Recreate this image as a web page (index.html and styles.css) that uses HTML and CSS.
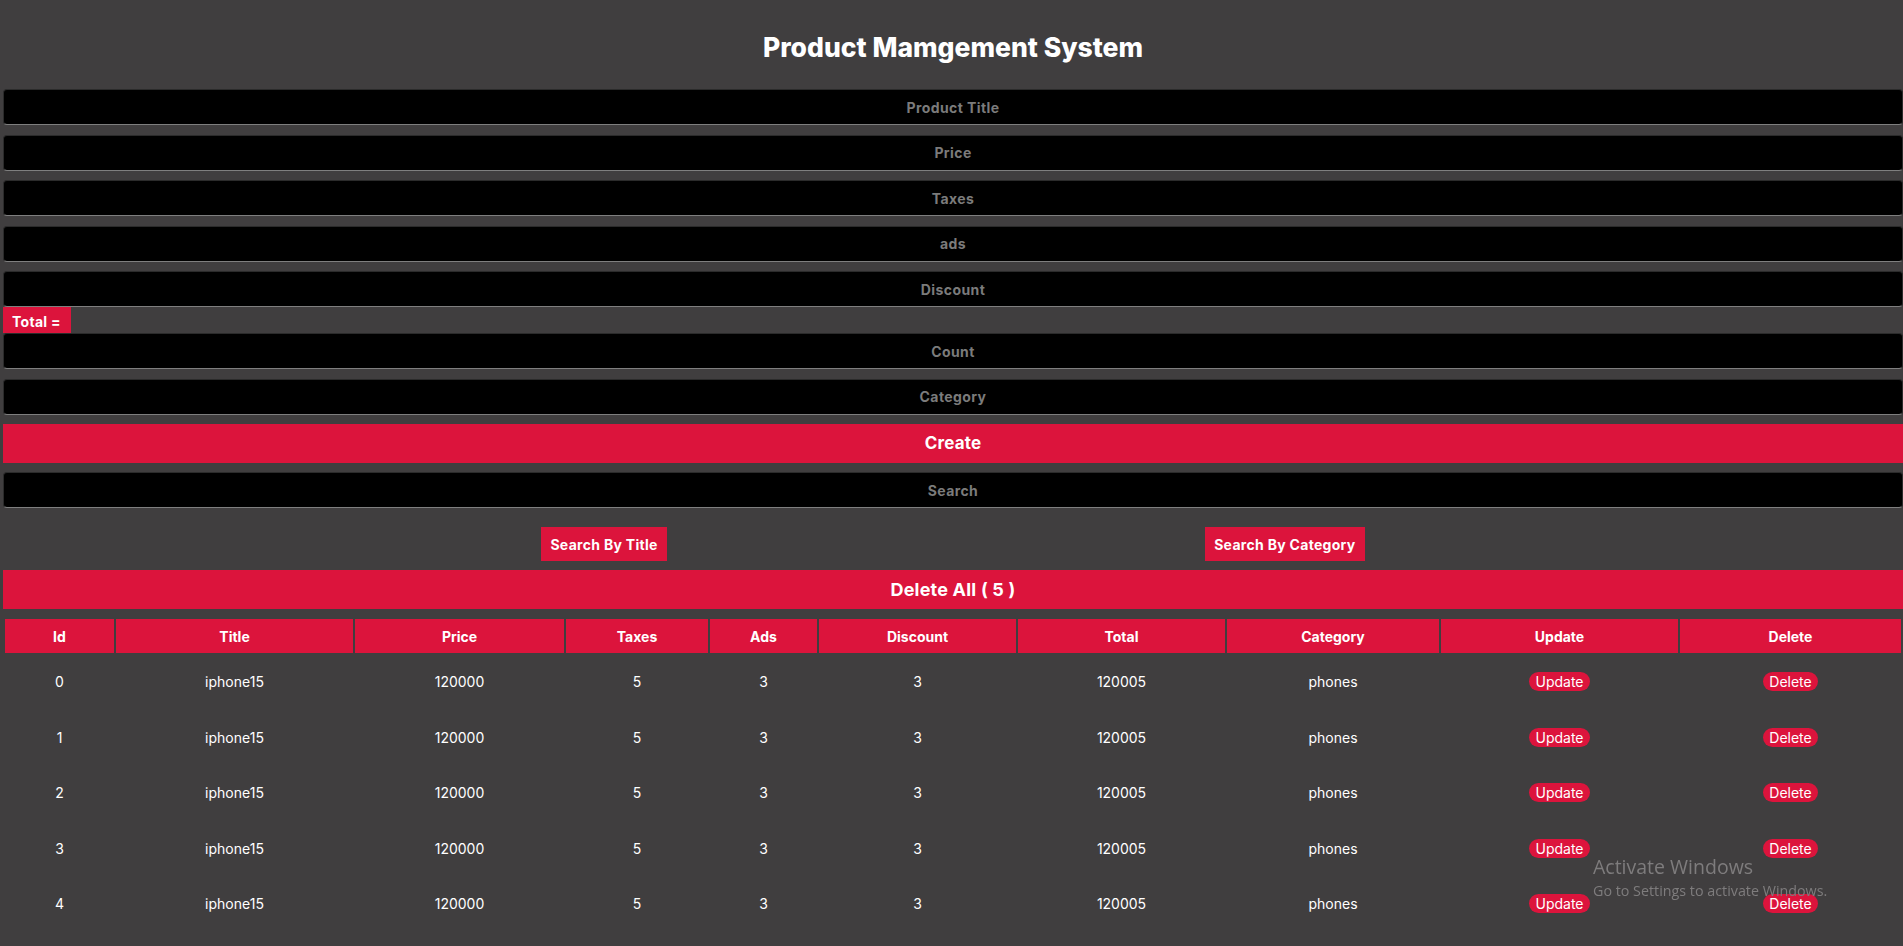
FILE: index.html
```html
<!DOCTYPE html>
<html lang="en">
<head>
<meta charset="UTF-8">
<title>Product Mamgement System</title>
<link rel="stylesheet" href="styles.css">
</head>
<body>
<div class="page">
  <h1 class="title">Product Mamgement System</h1>
  <div class="form">
    <input class="field" type="text" placeholder="Product Title">
    <input class="field gap" type="number" placeholder="Price">
    <input class="field gap" type="number" placeholder="Taxes">
    <input class="field gap" type="number" placeholder="ads">
    <input class="field gap" type="number" placeholder="Discount">
    <div class="total-row"><small class="total">Total =</small></div>
    <input class="field" type="number" placeholder="Count">
    <input class="field gap" type="text" placeholder="Category">
    <button class="bar create">Create</button>
    <input class="field gap search" type="text" placeholder="Search">
    <div class="search-buttons">
      <button class="sbtn">Search By Title</button>
      <button class="sbtn">Search By Category</button>
    </div>
    <button class="bar delete-all">Delete All ( 5 )</button>
  </div>
  <table class="products">
    <colgroup>
      <col class="c-id"><col class="c-title"><col class="c-price"><col class="c-taxes"><col class="c-ads">
      <col class="c-discount"><col class="c-total"><col class="c-category"><col class="c-update"><col class="c-delete">
    </colgroup>
    <thead>
      <tr><th>Id</th><th>Title</th><th>Price</th><th>Taxes</th><th>Ads</th><th>Discount</th><th>Total</th><th>Category</th><th>Update</th><th>Delete</th></tr>
    </thead>
    <tbody>
      <tr><td>0</td><td>iphone15</td><td>120000</td><td>5</td><td>3</td><td>3</td><td>120005</td><td>phones</td><td><button class="pill">Update</button></td><td><button class="pill">Delete</button></td></tr>
      <tr><td>1</td><td>iphone15</td><td>120000</td><td>5</td><td>3</td><td>3</td><td>120005</td><td>phones</td><td><button class="pill">Update</button></td><td><button class="pill">Delete</button></td></tr>
      <tr><td>2</td><td>iphone15</td><td>120000</td><td>5</td><td>3</td><td>3</td><td>120005</td><td>phones</td><td><button class="pill">Update</button></td><td><button class="pill">Delete</button></td></tr>
      <tr><td>3</td><td>iphone15</td><td>120000</td><td>5</td><td>3</td><td>3</td><td>120005</td><td>phones</td><td><button class="pill">Update</button></td><td><button class="pill">Delete</button></td></tr>
      <tr><td>4</td><td>iphone15</td><td>120000</td><td>5</td><td>3</td><td>3</td><td>120005</td><td>phones</td><td><button class="pill">Update</button></td><td><button class="pill">Delete</button></td></tr>
    </tbody>
  </table>
</div>
<div class="watermark">
  <div class="wm-title">Activate Windows</div>
  <div class="wm-sub">Go to Settings to activate Windows.</div>
</div>
</body>
</html>
```

FILE: styles.css
```css
* { box-sizing: border-box; }

html, body {
  margin: 0;
  padding: 0;
  background: #403e3f;
  overflow: hidden;
}

body {
  font-family: Inter, "Liberation Sans", sans-serif;
  color: #fff;
}

.page {
  padding-left: 3px;
}

.title {
  margin: 0;
  padding: 32px 0 27px;
  line-height: 30px;
  font-size: 26.5px;
  font-weight: 800;
  text-align: center;
  color: #fff;
}

.form {
  display: flex;
  flex-direction: column;
}

.field {
  width: 100%;
  height: 36px;
  margin: 0;
  padding: 0 8px;
  background: #000;
  color: #fff;
  border: 1px solid;
  border-color: #2b2b2b #2b2b2b #7f7f7f #2b2b2b;
  border-radius: 4px;
  outline: none;
  text-align: center;
  font-family: Inter, "Liberation Sans", sans-serif;
  font-size: 14px;
  font-weight: 700;
  letter-spacing: 0.4px;
}

.field::placeholder {
  color: #7b7b7b;
  font-weight: 700;
}

.field::-webkit-outer-spin-button,
.field::-webkit-inner-spin-button {
  -webkit-appearance: none;
  margin: 0;
}

.gap { margin-top: 9.5px; }

.total-row {
  display: flex;
  height: 26px;
}

.total {
  display: flex;
  align-items: flex-end;
  padding: 0 10px 2px 9px;
  background: #dc143c;
  color: #fff;
  font-size: 14px;
  font-weight: 700;
  letter-spacing: 0.3px;
  line-height: 18px;
}

.bar {
  width: 100%;
  margin: 9.5px 0 0;
  height: 38.5px;
  border: none;
  background: #dc143c;
  color: #fff;
  font-family: Inter, "Liberation Sans", sans-serif;
  font-size: 17px;
  font-weight: 700;
  letter-spacing: 0.2px;
  cursor: pointer;
}

.search { margin-top: 9.5px; }

.search-buttons {
  display: flex;
  justify-content: space-evenly;
  margin-top: 19px;
}

.sbtn {
  height: 34px;
  padding: 0 9px;
  border: none;
  background: #dc143c;
  color: #fff;
  font-family: Inter, "Liberation Sans", sans-serif;
  font-size: 14px;
  font-weight: 700;
  letter-spacing: 0.3px;
  cursor: pointer;
}

.delete-all {
  margin-top: 9px;
  font-size: 18px;
}

.products {
  width: 100%;
  margin-top: 8.5px;
  border-spacing: 2px;
  table-layout: fixed;
  text-align: center;
  font-size: 14px;
}

.c-id { width: 109px; }
.c-title { width: 237px; }
.c-price { width: 209px; }
.c-taxes { width: 142px; }
.c-ads { width: 107px; }
.c-discount { width: 197px; }
.c-total { width: 207px; }
.c-category { width: 212px; }
.c-update { width: 237px; }
.c-delete { width: 221px; }

.products th {
  height: 34px;
  padding: 0;
  background: #dc143c;
  color: #fff;
  font-weight: 700;
  font-size: 14px;
}

.products td {
  height: 53.5px;
  padding: 0;
  color: #fff;
  font-weight: 400;
}

.pill {
  height: 19px;
  padding: 0 6px;
  border: none;
  border-radius: 10px;
  background: #dc143c;
  color: #fff;
  font-family: Inter, "Liberation Sans", sans-serif;
  font-size: 14px;
  line-height: 19px;
  cursor: pointer;
}

.watermark {
  position: fixed;
  left: 1593px;
  top: 853px;
  color: #7e7c7d;
  font-family: "Open Sans", "Noto Sans", sans-serif;
  pointer-events: none;
}

.wm-title {
  font-size: 19.5px;
  line-height: 27px;
}

.wm-sub {
  font-size: 14.3px;
  line-height: 19px;
  margin-top: 1px;
}
```
